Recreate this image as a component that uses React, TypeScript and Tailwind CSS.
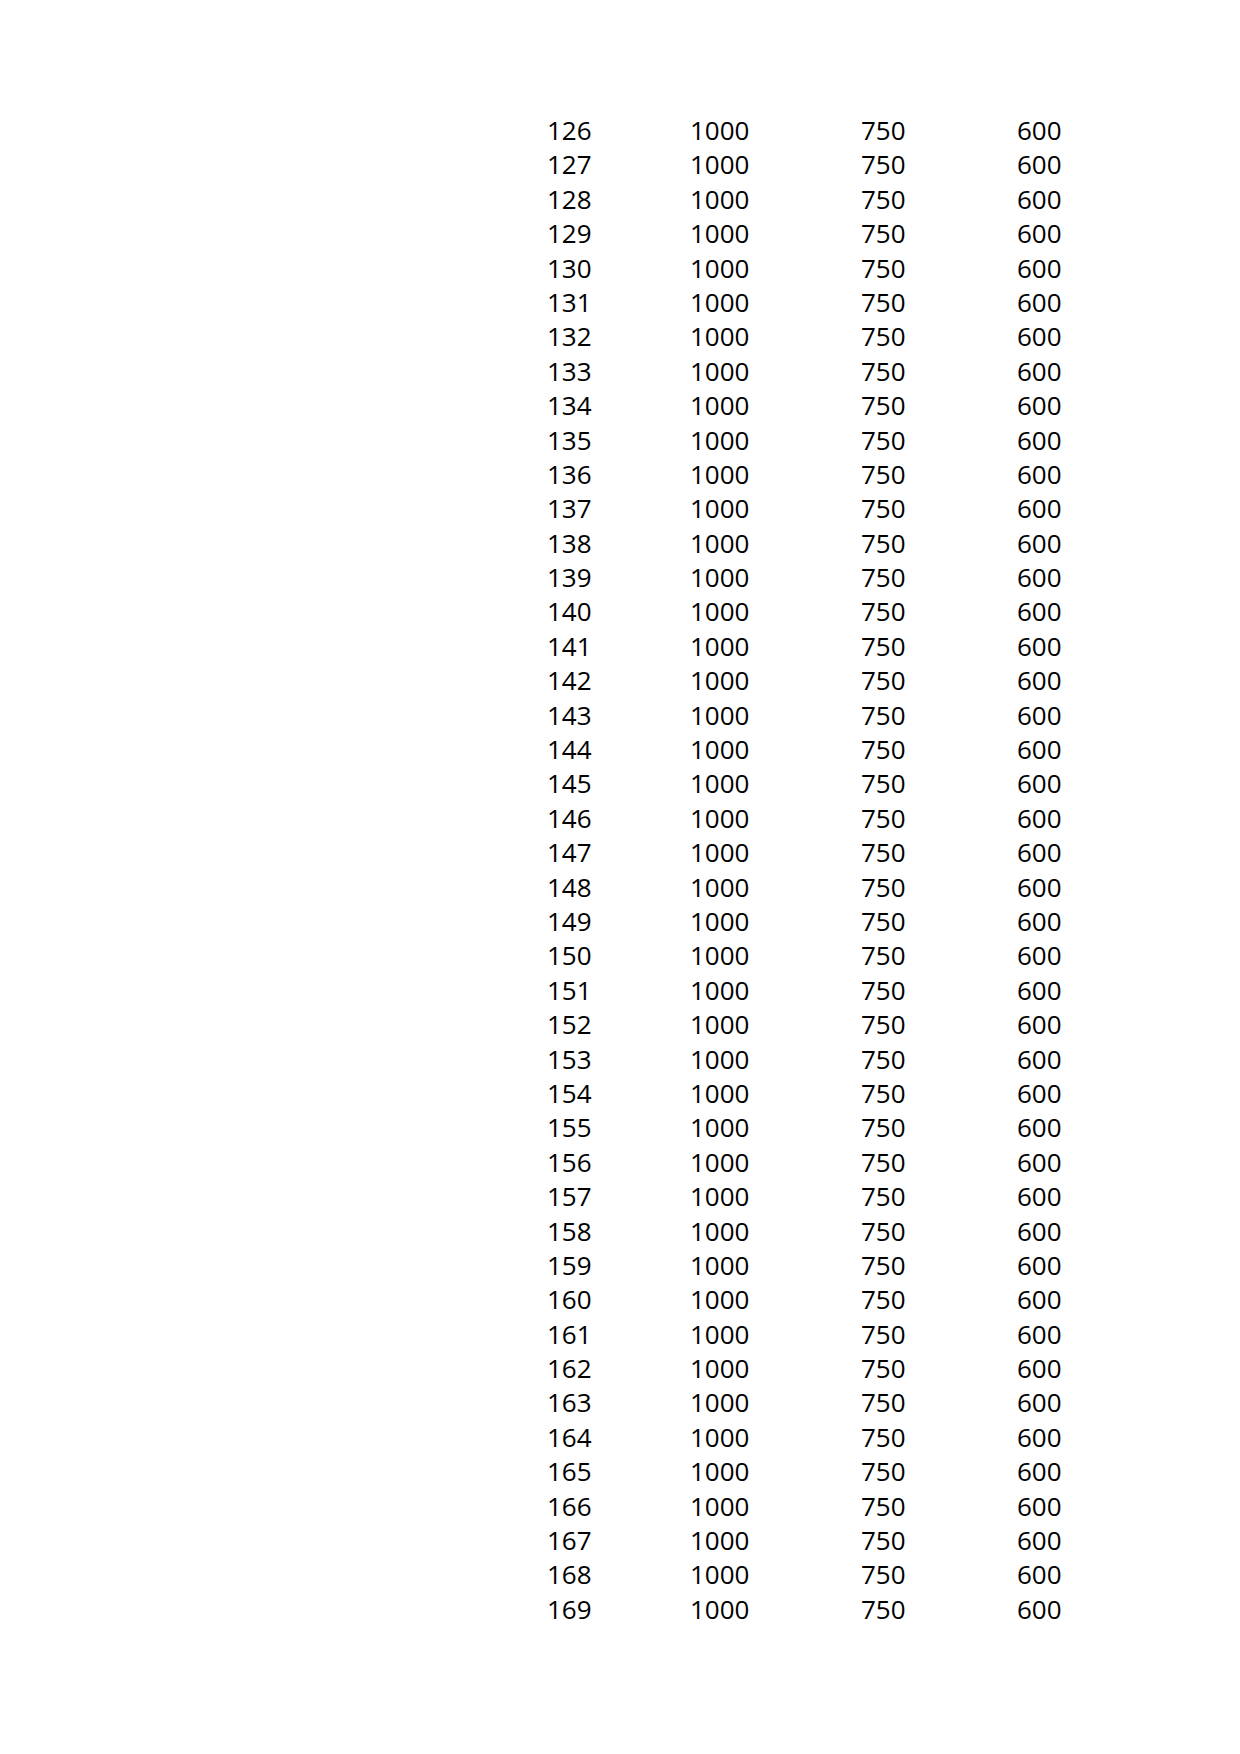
const rows = Array.from({ length: 44 }, (_, i) => 126 + i);

export default function App() {
  return (
    <div className="min-h-[1754px] w-[1240px] bg-white pt-[113px] pl-[547px] text-black [font-family:'Open_Sans','Noto_Sans',sans-serif] text-[26px]">
      {rows.map((n) => (
        <div key={n} className="flex h-[34.4px] leading-[34.4px]">
          <span className="w-[143px]">{n}</span>
          <span className="w-[171px]">1000</span>
          <span className="w-[156px]">750</span>
          <span>600</span>
        </div>
      ))}
    </div>
  );
}
